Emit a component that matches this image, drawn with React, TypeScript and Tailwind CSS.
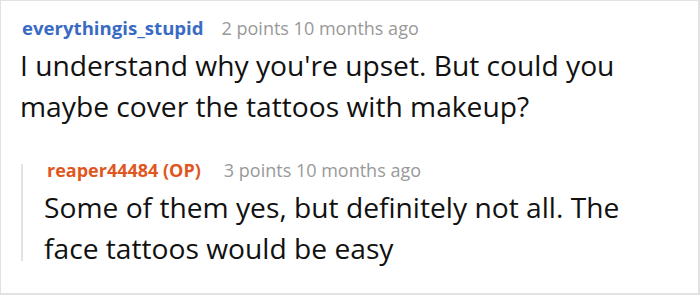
import React from "react";

export default function App() {
  return (
    <div
      className="w-[700px] h-[295px] bg-white border-t border-l border-r-2 border-b-2 border-[#e2e2e2] overflow-hidden"
      style={{ fontFamily: '"Open Sans", sans-serif' }}
    >
      <div className="pl-[19px] pt-[15px]">
        <div className="flex items-baseline leading-[24px] pl-[2px]">
          <span className="font-bold text-[18.6px] text-[#3a6bc4]">everythingis_stupid</span>
          <span className="ml-[18px] text-[18px] text-[#999999]">2 points 10 months ago</span>
        </div>
        <p className="mt-[5px] text-[28.2px] leading-[41px] text-[#111111]">
          I understand why you're upset. But could you
          <br />
          maybe cover the tattoos with makeup?
        </p>
        <div className="mt-[31px] flex">
          <div className="w-[2px] bg-[#e3e3e3] h-[97px] mt-[6px] ml-[1px]" />
          <div className="pl-[21px]">
            <div className="flex items-baseline text-[18px] leading-[24px] pl-[3px]">
              <span className="font-bold text-[#e0561f]">reaper44484 (OP)</span>
              <span className="ml-[23px] text-[#999999]">3 points 10 months ago</span>
            </div>
            <p className="mt-[5px] text-[28.2px] leading-[41px] text-[#111111]">
              Some of them yes, but definitely not all. The
              <br />
              face tattoos would be easy
            </p>
          </div>
        </div>
      </div>
    </div>
  );
}
